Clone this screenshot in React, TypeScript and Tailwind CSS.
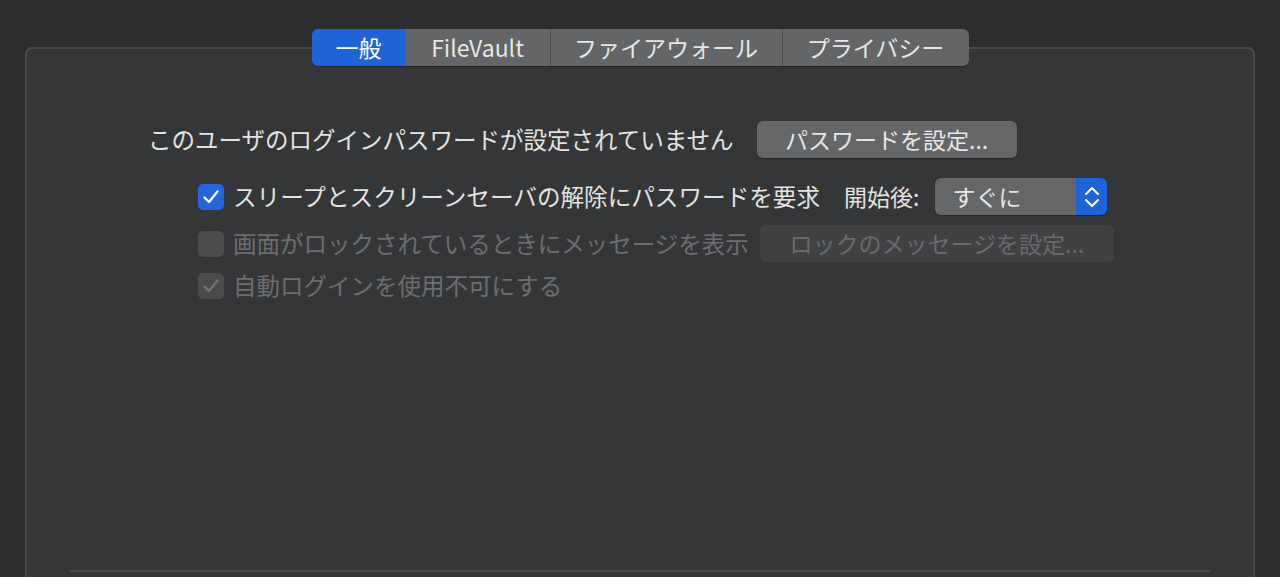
const font = { fontFamily: '"Noto Sans CJK JP", "Noto Sans", sans-serif' }

const tabs = ['一般', 'FileVault', 'ファイアウォール', 'プライバシー']
const tabWidths = ['w-[94px]', 'w-[144px]', 'w-[232px]', 'w-[187px]']

function Check({ checked, disabled }: { checked?: boolean; disabled?: boolean }) {
  const box = disabled ? 'bg-[#4a4b4d]' : 'bg-[#2366dc]'
  const stroke = disabled ? '#727375' : '#ffffff'
  return (
    <div className={`w-[26px] h-[26px] rounded-[5px] shrink-0 flex items-center justify-center ${box}`}>
      {checked && (
        <svg width="20" height="20" viewBox="0 0 20 20" fill="none">
          <path d="M3.5 10.5 L8 15 L16.5 4.5" stroke={stroke} strokeWidth="2.3" strokeLinecap="round" strokeLinejoin="round" />
        </svg>
      )}
    </div>
  )
}

export default function App() {
  return (
    <div className="w-[1280px] h-[577px] overflow-hidden bg-[#2c2d2f] text-[#e2e2e2]" style={font}>
      <div className="pt-[29px] flex flex-col items-center">
        {/* Tabs */}
        <div className="relative z-10 flex h-[37px] rounded-[6px] overflow-hidden shadow-[0_1px_1px_rgba(0,0,0,0.35)]">
          {tabs.map((t, i) => (
            <div
              key={t}
              className={`${tabWidths[i]} flex items-center justify-center text-[23px] leading-none ${
                i === 0 ? 'bg-[#1e64d8] text-white' : 'bg-[#646567] text-[#e6e6e6]'
              } ${i > 1 ? 'border-l border-[#4f5052]' : ''}`}
            >
              {t}
            </div>
          ))}
        </div>

        {/* Panel */}
        <div className="-mt-[19px] w-[1230px] h-[600px] rounded-[7px] border-2 border-[#48494b] bg-[#353638] pt-[72px]">
          <div className="flex items-center h-[37px] pl-[121px]">
            <span className="text-[23.5px] leading-none">このユーザのログインパスワードが設定されていません</span>
            <button className="ml-[23px] w-[260px] h-[37px] rounded-[6px] bg-[#656668] text-[23px] leading-none text-[#e6e6e6] shadow-[0_1px_1px_rgba(0,0,0,0.3)]">
              パスワードを設定...
            </button>
          </div>

          <div className="flex items-center h-[37px] pl-[171px] mt-[20px]">
            <Check checked />
            <span className="ml-[9px] text-[23.6px] leading-none">スリープとスクリーンセーバの解除にパスワードを要求</span>
            <span className="ml-[24px] text-[23px] leading-none">開始後:</span>
            <div className="ml-[16px] w-[172px] h-[37px] rounded-[6px] overflow-hidden flex shadow-[0_1px_1px_rgba(0,0,0,0.3)]">
              <div className="flex-1 bg-[#656668] flex items-center pl-[17px] text-[23px] leading-none text-[#e6e6e6]">すぐに</div>
              <div className="w-[31px] bg-[#1e64d8] flex items-center justify-center">
                <svg width="18" height="30" viewBox="0 0 18 30" fill="none">
                  <path d="M3 12 L9 6 L15 12" stroke="#fff" strokeWidth="2" strokeLinecap="round" strokeLinejoin="round" />
                  <path d="M3 18 L9 24 L15 18" stroke="#fff" strokeWidth="2" strokeLinecap="round" strokeLinejoin="round" />
                </svg>
              </div>
            </div>
          </div>

          <div className="flex items-center h-[37px] pl-[171px] mt-[10px]">
            <Check disabled />
            <span className="ml-[9px] text-[23.5px] leading-none text-[#6c6d6f]">画面がロックされているときにメッセージを表示</span>
            <button className="ml-[11px] w-[354px] h-[37px] rounded-[6px] bg-[#404143] text-[23px] leading-none text-[#696a6c]">
              ロックのメッセージを設定...
            </button>
          </div>

          <div className="flex items-center h-[26px] pl-[171px] mt-[11px]">
            <Check checked disabled />
            <span className="ml-[9px] text-[23.5px] leading-none text-[#6c6d6f]">自動ログインを使用不可にする</span>
          </div>

          <div className="ml-[43px] mt-[271px] w-[1140px] h-[2px] bg-[#4a4b4d]" />
        </div>
      </div>
    </div>
  )
}
